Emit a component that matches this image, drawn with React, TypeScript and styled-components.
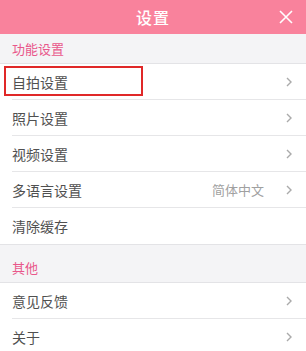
import React from "react";
import styled, { createGlobalStyle } from "styled-components";

const Global = createGlobalStyle`
  html, body { margin: 0; padding: 0; background: #ffffff; }
  body { font-family: "Noto Sans CJK SC", "Noto Sans", sans-serif; }
`;

const Page = styled.div`
  width: 306px;
  min-height: 351px;
  background: #f4f4f6;
  overflow: hidden;
  font-family: "Noto Sans CJK SC", sans-serif;
`;

const Header = styled.div`
  height: 34px;
  background: #f9829c;
  display: flex;
  align-items: center;
  justify-content: center;
  position: relative;
`;

const Title = styled.div`
  color: #ffffff;
  font-size: 16px;
  font-weight: 500;
  letter-spacing: 1px;
`;

const CloseBtn = styled.div`
  position: absolute;
  right: 13px;
  top: 10px;
  width: 14px;
  height: 14px;
  display: flex;
`;

const SectionHeader = styled.div<{ $top?: number }>`
  height: 30px;
  margin-top: ${(p) => p.$top ?? 0}px;
  padding: 0 12px;
  display: flex;
  align-items: center;
  color: #e9578b;
  font-size: 13px;
  border-bottom: 1px solid #e3e3e6;
  box-sizing: border-box;
`;

const List = styled.div`
  background: #ffffff;
  border-bottom: 1px solid #e3e3e6;
`;

const Row = styled.div<{ $last?: boolean }>`
  height: 36px;
  margin-left: 12px;
  padding-right: 14px;
  box-sizing: border-box;
  display: flex;
  align-items: center;
  border-bottom: ${(p) => (p.$last ? "none" : "1px solid #e6e6e8")};
  position: relative;
`;

const Label = styled.div`
  flex: 1;
  color: #505050;
  font-size: 14px;
`;

const Value = styled.div`
  color: #a0a0a0;
  font-size: 13px;
  margin-right: 22px;
`;

const Highlight = styled.div`
  position: absolute;
  left: -8px;
  top: 2px;
  width: 139px;
  height: 30px;
  border: 2px solid #e02828;
  box-sizing: border-box;
`;

const Chevron = () => (
  <svg width="6" height="10" viewBox="0 0 6 10">
    <path d="M1 1 L5 5 L1 9" fill="none" stroke="#aaaaaa" strokeWidth="1.4" />
  </svg>
);

type Item = { label: string; value?: string; arrow?: boolean; mark?: boolean };

const section1: Item[] = [
  { label: "自拍设置", arrow: true, mark: true },
  { label: "照片设置", arrow: true },
  { label: "视频设置", arrow: true },
  { label: "多语言设置", value: "简体中文", arrow: true },
  { label: "清除缓存" },
];

const section2: Item[] = [
  { label: "意见反馈", arrow: true },
  { label: "关于", arrow: true },
];

const renderList = (items: Item[]) => (
  <List>
    {items.map((it, i) => (
      <Row key={it.label} $last={i === items.length - 1}>
        {it.mark && <Highlight />}
        <Label>{it.label}</Label>
        {it.value && <Value>{it.value}</Value>}
        {it.arrow && <Chevron />}
      </Row>
    ))}
  </List>
);

export default function App() {
  return (
    <Page lang="zh-CN">
      <Global />
      <Header>
        <Title>设置</Title>
        <CloseBtn>
          <svg width="14" height="14" viewBox="0 0 14 14">
            <path d="M1 1 L13 13 M13 1 L1 13" stroke="#ffffff" strokeWidth="1.6" />
          </svg>
        </CloseBtn>
      </Header>
      <SectionHeader>功能设置</SectionHeader>
      {renderList(section1)}
      <SectionHeader $top={8}>其他</SectionHeader>
      {renderList(section2)}
    </Page>
  );
}
